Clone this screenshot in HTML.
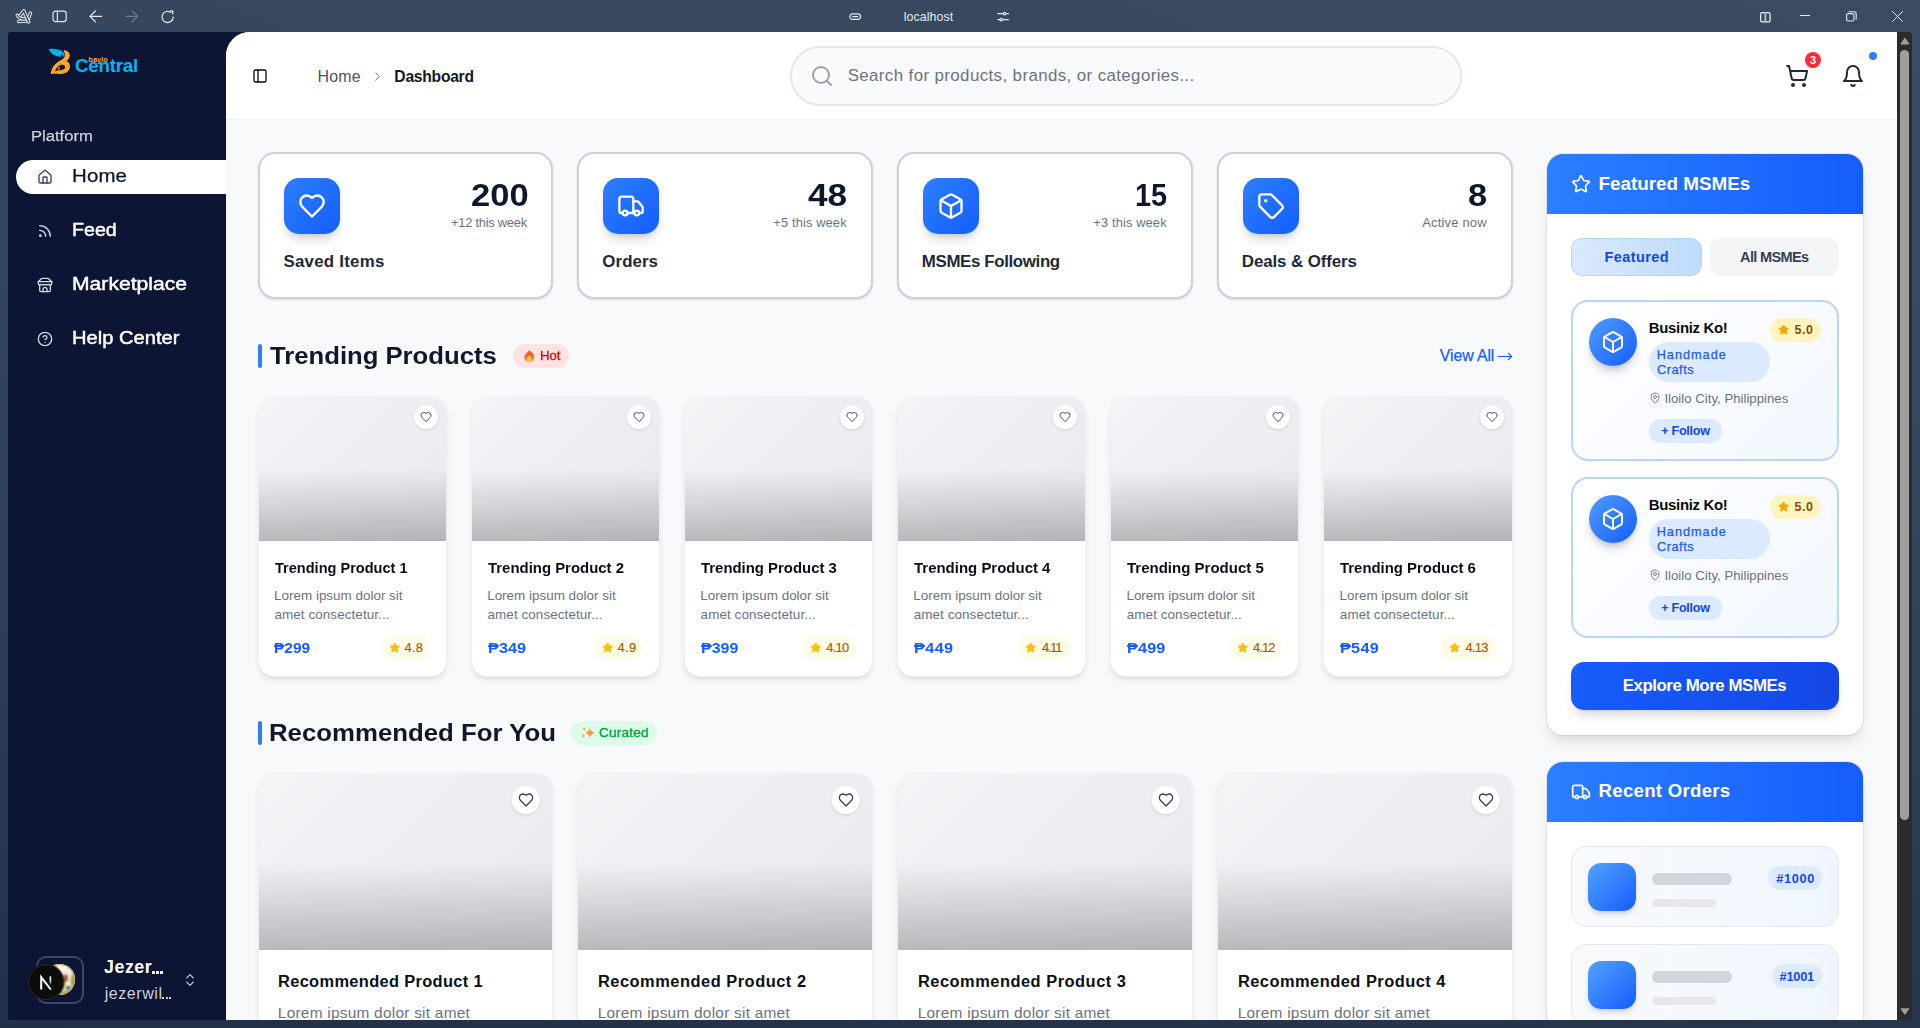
<!DOCTYPE html>
<html lang="en"><head><meta charset="utf-8"><title>Dashboard</title><style>
*{box-sizing:border-box;margin:0;padding:0}
html,body{width:1920px;height:1028px;overflow:hidden;font-family:"Liberation Sans",sans-serif}
body{font-family:"Liberation Sans",sans-serif;position:relative;background:linear-gradient(90deg,rgba(0,0,0,.015) 0%,rgba(255,255,255,.02) 100%),linear-gradient(180deg,#37475f 0%,#35455d 30%,#2f3e56 62%,#27364e 86%,#223149 100%);}
.a{position:absolute}
.t{position:absolute;white-space:nowrap;line-height:1;display:block}
.i{position:absolute;display:block;overflow:visible}
#side{position:absolute;left:8px;top:32px;width:260px;height:988px;background:#0c1533;border-radius:3px 0 0 3px}
#main{position:absolute;left:226px;top:32px;width:1671px;height:988px;overflow:hidden;border-top-left-radius:24px;background:#f8f9fb}
#in{position:absolute;left:-226px;top:-32px;width:1920px;height:1028px}
#sb{position:absolute;left:1897px;top:32px;width:15px;height:988px;background:#2b2b2b;border-radius:0 3px 3px 0}
.card{position:absolute;background:#fff}
</style></head><body><svg class="i" style="left:10.00px;top:4.00px;" width="30.00" height="24.00" viewBox="10 4 30 24" fill="none" stroke="#e4e7ec" stroke-width="1" stroke-linecap="round" stroke-linejoin="round"><path d="M18.7 21.6L26.6 20.9" stroke="#e4e7ec" stroke-width="3.5"/><path d="M18.7 21.6L26.6 20.9" stroke="#35465d" stroke-width="1.5"/><path d="M30.5 13.1L28.1 19.3" stroke="#e4e7ec" stroke-width="3.5"/><path d="M30.5 13.1L28.1 19.3" stroke="#35465d" stroke-width="1.5"/><path d="M17.3 15.3Q19.6 18.9 24.7 19.1" stroke="#e4e7ec" stroke-width="3.5"/><path d="M17.3 15.3Q19.6 18.9 24.7 19.1" stroke="#35465d" stroke-width="1.5"/><path d="M20 15.7L23.7 10.9L28.6 22" stroke="#e4e7ec" stroke-width="3.5"/><path d="M20 15.7L23.7 10.9L28.6 22" stroke="#35465d" stroke-width="1.5"/></svg><svg class="i" style="left:52.40px;top:10.20px;" width="15.20" height="12.80" viewBox="0 0 15.2 12.8" fill="none" stroke="#e4e7ec" stroke-width="1.2" stroke-linecap="round" stroke-linejoin="round"><rect x="1" y="1.2" width="13.2" height="10.4" rx="2.6"/><path d="M5.4 1.4v10"/></svg><svg class="i" style="left:89.20px;top:10.30px;" width="13.60" height="12.80" viewBox="0 0 13.6 12.8" fill="none" stroke="#e4e7ec" stroke-width="1.2" stroke-linecap="round" stroke-linejoin="round"><path d="M12.6 6.4H1.2"/><path d="M6.4 1 1 6.4l5.4 5.4"/></svg><svg class="i" style="left:125.40px;top:10.30px;" width="13.60" height="12.80" viewBox="0 0 13.6 12.8" fill="none" stroke="#6f7c90" stroke-width="1.2" stroke-linecap="round" stroke-linejoin="round"><path d="M1 6.4h11.4"/><path d="M7.2 1l5.4 5.4-5.4 5.4"/></svg><svg class="i" style="left:161.00px;top:10.20px;" width="14.00" height="14.00" viewBox="0 0 14 14" fill="none" stroke="#e4e7ec" stroke-width="1.2" stroke-linecap="round" stroke-linejoin="round"><path d="M12.2 6.9A5.6 5.6 0 1 1 9.9 2.4"/><path d="M9.6 0.9l2.4 0.3-0.4 2.6"/></svg><svg class="i" style="left:848.60px;top:12.90px;" width="12.40" height="7.20" viewBox="0 0 12.4 7.2" fill="none" stroke="#e4e7ec" stroke-width="1.2" stroke-linecap="round" stroke-linejoin="round"><rect x="0.8" y="0.8" width="10.8" height="5.6" rx="2.8"/><path d="M3.6 3.6h5.2"/></svg><span class="t" id="t0" style="left:903.66px;top:11.00px;font-size:12.40px;color:#e4e7ec;letter-spacing:0.065px;">localhost</span><svg class="i" style="left:997.00px;top:10.90px;" width="12.40" height="11.20" viewBox="0 0 12.4 11.2" fill="none" stroke="#e4e7ec" stroke-width="1.1" stroke-linecap="round" stroke-linejoin="round"><path d="M0.8 2.6h5.4"/><path d="M8.8 2.6h2.8"/><circle cx="7.5" cy="2.6" r="1.3"/><path d="M0.8 8.6h2.2"/><path d="M5.6 8.6h6"/><circle cx="4.3" cy="8.6" r="1.3"/></svg><svg class="i" style="left:1759.60px;top:11.60px;" width="10.80" height="10.60" viewBox="0 0 10.8 10.6" fill="none" stroke="#f1f3f6" stroke-width="1.2" stroke-linecap="round" stroke-linejoin="round"><rect x="0.7" y="0.7" width="9.4" height="9.2" rx="1.4"/><path d="M5.4 0.9v8.8" stroke-width="1.8" stroke="#b9c0cb"/></svg><div class="a" style="left:1800.00px;top:15.00px;width:10.00px;height:1.00px;background:#e4e7ec"></div><svg class="i" style="left:1845.60px;top:10.60px;" width="10.80" height="10.60" viewBox="0 0 10.8 10.6" fill="none" stroke="#e4e7ec" stroke-width="1.1" stroke-linecap="round" stroke-linejoin="round"><rect x="0.6" y="2.6" width="7.4" height="7.4" rx="1.6"/><path d="M2.8 0.7h5.2a2.2 2.2 0 0 1 2.2 2.2v5.2"/></svg><svg class="i" style="left:1891.50px;top:10.60px;" width="11.00" height="11.00" viewBox="0 0 11 11" fill="none" stroke="#e4e7ec" stroke-width="1.0" stroke-linecap="round" stroke-linejoin="round"><path d="M0.5 0.5l10 10M10.5 0.5l-10 10"/></svg><div id="side"></div><svg class="i" style="left:48.00px;top:48.00px;" width="24.00" height="28.00" viewBox="48 48 24 28" fill="none" stroke="none" stroke-width="0" stroke-linecap="round" stroke-linejoin="round"><path fill="#f9a629" fill-rule="evenodd" stroke="none" d="M63.6 49.9C67.5 50.5 70.2 52.8 69.8 55.6C69.6 58 68.2 59.8 66.6 61C69 62 70.4 64.4 70 67.2C69.5 71 66 73.6 61 73.9C57.5 74.1 54 73.3 50.9 74.2C50.6 68.6 55.2 63.2 61 60.1C63.5 58.7 65 57 64.9 55C64.8 53.2 64 51.6 63.6 49.9ZM58.7 66.1C60.6 64.4 64.2 64.3 65 66.6C65.6 68.7 63.5 70.3 60 70.2C58 70.2 56.4 70.6 55 71.3C55.8 69.1 57.2 67.3 58.7 66.1Z"/><path fill="#f9a629" stroke="none" d="M57.6 69.6C57.8 67.8 59 66.6 60.6 66.5C59.6 67.3 59.3 68.2 59.6 69.2Z"/><path fill="#00aeef" stroke="none" d="M48.5 49.1C53 48.2 60 48.9 63.2 52C64.5 53.3 64.7 55.2 63.9 57.4C63.6 55.6 62.2 54.5 60.2 54.3C61.2 55 61.7 55.9 61.5 56.8C57 57.1 51 54.6 48.5 49.1Z"/><path fill="none" stroke="#5fd0ff" stroke-width=".5" d="M53.6 53.4C56 53.2 58.6 53.4 60.6 54.2"/></svg><span class="t" id="t1" style="left:75.03px;top:57.43px;font-size:18.75px;color:#00b4f5;font-weight:700;letter-spacing:-0.252px;">Central</span><span class="t" id="t2" style="left:88.31px;top:55.54px;font-size:7.40px;color:#f9a629;font-weight:700;letter-spacing:0.066px;">baylo</span><span class="t" id="t3" style="left:31.07px;top:127.63px;font-size:15.20px;color:#cdd0d9;-webkit-text-stroke:0.25px #cdd0d9;transform:scaleX(1.0926);transform-origin:0 0;">Platform</span><div class="a" style="left:16.00px;top:160.00px;width:210.00px;height:34.00px;background:#fff;border-radius:17px 0 0 17px"></div><svg class="i" style="left:37.00px;top:168.80px;" width="16.00" height="16.00" viewBox="0 0 24 24" fill="none" stroke="#39405f" stroke-width="2" stroke-linecap="round" stroke-linejoin="round"><path d="M15 21v-8a1 1 0 0 0-1-1h-4a1 1 0 0 0-1 1v8"/><path d="M3 10a2 2 0 0 1 .709-1.528l7-5.999a2 2 0 0 1 2.582 0l7 5.999A2 2 0 0 1 21 10v9a2 2 0 0 1-2 2H5a2 2 0 0 1-2-2z"/></svg><span class="t" id="t4" style="left:72.26px;top:167.14px;font-size:18.26px;color:#0c1533;letter-spacing:0.112px;-webkit-text-stroke:0.25px #0c1533;transform:scaleX(1.1200);transform-origin:0 0;">Home</span><svg class="i" style="left:37.00px;top:223.20px;" width="16.00" height="16.00" viewBox="0 0 24 24" fill="none" stroke="#d5d8e0" stroke-width="2" stroke-linecap="round" stroke-linejoin="round"><path d="M4 11a9 9 0 0 1 9 9"/><path d="M4 4a16 16 0 0 1 16 16"/><circle cx="5" cy="19" r="1"/></svg><span class="t" id="t5" style="left:72.23px;top:221.14px;font-size:18.86px;color:#ffffff;-webkit-text-stroke:0.45px #ffffff;transform:scaleX(1.0396);transform-origin:0 0;">Feed</span><svg class="i" style="left:37.00px;top:276.80px;" width="16.00" height="16.00" viewBox="0 0 24 24" fill="none" stroke="#d5d8e0" stroke-width="2" stroke-linecap="round" stroke-linejoin="round"><path d="m2 7 4.41-4.41A2 2 0 0 1 7.83 2h8.34a2 2 0 0 1 1.42.59L22 7"/><path d="M4 12v8a2 2 0 0 0 2 2h12a2 2 0 0 0 2-2v-8"/><path d="M15 22v-4a2 2 0 0 0-2-2h-2a2 2 0 0 0-2 2v4"/><path d="M2 7h20"/><path d="M22 7v3a2 2 0 0 1-2 2a2.7 2.7 0 0 1-1.59-.63.7.7 0 0 0-.82 0A2.7 2.7 0 0 1 16 12a2.7 2.7 0 0 1-1.59-.63.7.7 0 0 0-.82 0A2.7 2.7 0 0 1 12 12a2.7 2.7 0 0 1-1.59-.63.7.7 0 0 0-.82 0A2.7 2.7 0 0 1 8 12a2.7 2.7 0 0 1-1.59-.63.7.7 0 0 0-.82 0A2.7 2.7 0 0 1 4 12a2 2 0 0 1-2-2V7"/></svg><span class="t" id="t6" style="left:72.12px;top:275.14px;font-size:18.86px;color:#ffffff;-webkit-text-stroke:0.45px #ffffff;transform:scaleX(1.1200);transform-origin:0 0;">Marketplace</span><svg class="i" style="left:37.00px;top:330.80px;" width="16.00" height="16.00" viewBox="0 0 24 24" fill="none" stroke="#d5d8e0" stroke-width="2" stroke-linecap="round" stroke-linejoin="round"><circle cx="12" cy="12" r="10"/><path d="M9.09 9a3 3 0 0 1 5.83 1c0 2-3 3-3 3"/><path d="M12 17h.01"/></svg><span class="t" id="t7" style="left:72.19px;top:329.14px;font-size:18.86px;color:#ffffff;-webkit-text-stroke:0.45px #ffffff;transform:scaleX(1.0682);transform-origin:0 0;">Help Center</span><div class="a" style="left:36.00px;top:956.00px;width:48.00px;height:48.00px;border:2px solid #3d4669;border-radius:10px"></div><div class="a" style="left:44.30px;top:964.40px;width:30.90px;height:30.90px;border-radius:50%;overflow:hidden;background:#ece4cf"><div class="a" style="left:-2px;top:-2px;width:34.9px;height:34.9px;filter:blur(.8px);background:radial-gradient(ellipse 8% 14% at 68% 46%,#a3432b 0 50%,rgba(163,67,43,0) 100%),radial-gradient(ellipse 8% 7% at 75% 74%,#1f5553 0 50%,rgba(31,85,83,0) 100%),radial-gradient(ellipse 8% 28% at 88% 54%,#8c9c3c 0 45%,rgba(140,156,60,0) 100%),radial-gradient(ellipse 24% 9% at 66% 88%,#a3ad4c 0 50%,rgba(163,173,76,0) 100%),radial-gradient(ellipse 9% 26% at 60% 58%,#b8834c 0 50%,rgba(184,131,76,0) 100%),radial-gradient(circle at 70% 40%,#f6f2e6 0 40%,#ece4cf 70%,#d9b77c 100%)"></div></div><div class="a" style="left:44.30px;top:964.40px;width:30.90px;height:30.90px;border-radius:50%;border:1.2px solid #cf9148;opacity:.9"></div><div class="a" style="left:27.70px;top:963.60px;width:36.80px;height:36.80px;border-radius:50%;background:#0c0c0c;border:1.8px solid #303030;box-shadow:0 0 0 .6px rgba(0,0,0,.5)"></div><svg class="i" style="left:39.60px;top:975.60px;" width="12.00" height="14.40" viewBox="0 0 12 14.4" fill="none" stroke="#fff" stroke-width="1.5" stroke-linecap="round" stroke-linejoin="round"><defs><linearGradient id="ng" gradientUnits="userSpaceOnUse" x1="0" y1="0.4" x2="0" y2="9"><stop offset="0" stop-color="#fff"/><stop offset=".55" stop-color="#fff" stop-opacity=".85"/><stop offset="1" stop-color="#fff" stop-opacity="0"/></linearGradient></defs><path d="M1.2 13.6V1.2l9.6 12.3" stroke="#fff" stroke-width="2" fill="none" stroke-linejoin="miter" stroke-linecap="butt"/><path d="M10.4 0.4v8.6" stroke="url(#ng)" stroke-width="1.7" stroke-linecap="butt"/></svg><span class="t" id="t8" style="left:104.03px;top:959.06px;font-size:17.88px;color:#ffffff;font-weight:700;letter-spacing:0.513px;">Jezer</span><div class="a" style="left:152.40px;top:970.90px;width:2.90px;height:2.90px;background:#fff;border-radius:.6px"></div><div class="a" style="left:156.10px;top:970.90px;width:2.90px;height:2.90px;background:#fff;border-radius:.6px"></div><div class="a" style="left:159.90px;top:970.90px;width:2.90px;height:2.90px;background:#fff;border-radius:.6px"></div><span class="t" id="t9" style="left:104.69px;top:985.76px;font-size:16.00px;color:#cdd0d9;letter-spacing:0.562px;">jezerwil</span><div class="a" style="left:162.30px;top:996.80px;width:2.10px;height:2.00px;background:#cdd0d9"></div><div class="a" style="left:165.60px;top:996.80px;width:2.10px;height:2.00px;background:#cdd0d9"></div><div class="a" style="left:169.00px;top:996.80px;width:2.10px;height:2.00px;background:#cdd0d9"></div><svg class="i" style="left:182.10px;top:972.00px;" width="16.00" height="16.00" viewBox="0 0 24 24" fill="none" stroke="#c9ccd6" stroke-width="1.6" stroke-linecap="round" stroke-linejoin="round"><path d="m7 15 5 5 5-5"/><path d="m7 9 5-5 5 5"/></svg><div id="main"><div id="in"><div class="a" style="left:226.00px;top:32.00px;width:1671.00px;height:87.00px;background:#fff;border-bottom:1px solid #eef0f3;height:88px"></div><svg class="i" style="left:252.00px;top:68.20px;" width="16.00" height="16.00" viewBox="0 0 24 24" fill="none" stroke="#0f1115" stroke-width="2" stroke-linecap="round" stroke-linejoin="round"><rect x="3" y="3" width="18" height="18" rx="2"/><path d="M9 3v18"/></svg><span class="t" id="t10" style="left:317.49px;top:68.61px;font-size:15.94px;color:#4b5563;letter-spacing:0.233px;">Home</span><svg class="i" style="left:370.10px;top:68.60px;" width="15.00" height="15.00" viewBox="0 0 24 24" fill="none" stroke="#6b7280" stroke-width="1.6" stroke-linecap="round" stroke-linejoin="round"><path d="m9 18 6-6-6-6"/></svg><span class="t" id="t11" style="left:394.35px;top:68.87px;font-size:15.63px;color:#111827;font-weight:700;letter-spacing:-0.244px;">Dashboard</span><div class="a" style="left:790.00px;top:46.00px;width:672.00px;height:60.00px;background:#f9fafb;border:2px solid #e3e6ea;border-radius:30px"></div><svg class="i" style="left:810.00px;top:64.00px;" width="24.00" height="24.00" viewBox="0 0 24 24" fill="none" stroke="#99a1af" stroke-width="2" stroke-linecap="round" stroke-linejoin="round"><circle cx="11" cy="11" r="8"/><path d="m21 21-4.3-4.3"/></svg><span class="t" id="t12" style="left:847.63px;top:67.79px;font-size:16.90px;color:#6b7280;letter-spacing:0.390px;">Search for products, brands, or categories...</span><svg class="i" style="left:1785.00px;top:64.20px;" width="24.00" height="24.00" viewBox="0 0 24 24" fill="none" stroke="#1f2937" stroke-width="2" stroke-linecap="round" stroke-linejoin="round"><circle cx="8" cy="21" r="1"/><circle cx="19" cy="21" r="1"/><path d="M2.05 2.05h2l2.66 12.42a2 2 0 0 0 2 1.58h9.78a2 2 0 0 0 1.95-1.57l1.65-7.43H5.12"/></svg><div class="a" style="left:1805.00px;top:52.00px;width:16.00px;height:16.00px;background:#fb2c36;border-radius:50%"></div><span class="t" id="t13" style="left:1810.11px;top:55.19px;font-size:11.00px;color:#fff;font-weight:700;">3</span><svg class="i" style="left:1841.00px;top:64.20px;" width="24.00" height="24.00" viewBox="0 0 24 24" fill="none" stroke="#1f2937" stroke-width="2" stroke-linecap="round" stroke-linejoin="round"><path d="M6 8a6 6 0 0 1 12 0c0 7 3 9 3 9H3s3-2 3-9"/><path d="M10.3 21a1.94 1.94 0 0 0 3.4 0"/></svg><div class="a" style="left:1869.00px;top:52.20px;width:8.00px;height:8.00px;background:#2b7fff;border-radius:50%"></div><div class="a" style="left:258.00px;top:152.00px;width:295.00px;height:147.00px;background:#fff;border:2px solid #cdd2da;border-radius:17px;box-shadow:0 1px 3px rgba(0,0,0,.08),0 1px 2px rgba(0,0,0,.04)"></div><div class="a" style="left:284.00px;top:178.00px;width:56.00px;height:56.00px;background:linear-gradient(135deg,#2b7fff 0%,#155dfc 100%);border-radius:15px;box-shadow:0 8px 12px -3px rgba(0,0,0,.16),0 3px 5px -2px rgba(0,0,0,.10)"></div><svg class="i" style="left:298.00px;top:192.00px;" width="28.00" height="28.00" viewBox="0 0 24 24" fill="none" stroke="#fff" stroke-width="2" stroke-linecap="round" stroke-linejoin="round"><path d="M19 14c1.49-1.46 3-3.21 3-5.5A5.5 5.5 0 0 0 16.5 3c-1.76 0-3 .5-4.5 2-1.5-1.5-2.74-2-4.5-2A5.5 5.5 0 0 0 2 8.5c0 2.3 1.5 4.05 3 5.5l7 7Z"/></svg><span class="t" id="t14" style="left:470.60px;top:180.00px;font-size:31.13px;color:#0f172a;font-weight:700;transform:scaleX(1.1093);transform-origin:0 0;">200</span><span class="t" id="t15" style="left:450.97px;top:216.68px;font-size:12.90px;color:#6a7282;letter-spacing:-0.256px;">+12 this week</span><span class="t" id="t16" style="left:283.51px;top:254.13px;font-size:16.86px;color:#1f2937;font-weight:700;letter-spacing:0.237px;">Saved Items</span><div class="a" style="left:577.00px;top:152.00px;width:296.00px;height:147.00px;background:#fff;border:2px solid #cdd2da;border-radius:17px;box-shadow:0 1px 3px rgba(0,0,0,.08),0 1px 2px rgba(0,0,0,.04)"></div><div class="a" style="left:603.00px;top:178.00px;width:56.00px;height:56.00px;background:linear-gradient(135deg,#2b7fff 0%,#155dfc 100%);border-radius:15px;box-shadow:0 8px 12px -3px rgba(0,0,0,.16),0 3px 5px -2px rgba(0,0,0,.10)"></div><svg class="i" style="left:617.00px;top:192.00px;" width="28.00" height="28.00" viewBox="0 0 24 24" fill="none" stroke="#fff" stroke-width="2" stroke-linecap="round" stroke-linejoin="round"><path d="M14 18V6a2 2 0 0 0-2-2H4a2 2 0 0 0-2 2v11a1 1 0 0 0 1 1h2"/><path d="M15 18H9"/><path d="M19 18h2a1 1 0 0 0 1-1v-3.65a1 1 0 0 0-.22-.624l-3.48-4.35A1 1 0 0 0 17.52 8H14"/><circle cx="17" cy="18" r="2"/><circle cx="7" cy="18" r="2"/></svg><span class="t" id="t17" style="left:808.27px;top:180.00px;font-size:31.13px;color:#0f172a;font-weight:700;transform:scaleX(1.1296);transform-origin:0 0;">48</span><span class="t" id="t18" style="left:773.37px;top:216.68px;font-size:12.90px;color:#6a7282;letter-spacing:0.109px;">+5 this week</span><span class="t" id="t19" style="left:602.31px;top:254.13px;font-size:16.86px;color:#1f2937;font-weight:700;letter-spacing:0.077px;">Orders</span><div class="a" style="left:897.00px;top:152.00px;width:296.00px;height:147.00px;background:#fff;border:2px solid #cdd2da;border-radius:17px;box-shadow:0 1px 3px rgba(0,0,0,.08),0 1px 2px rgba(0,0,0,.04)"></div><div class="a" style="left:923.00px;top:178.00px;width:56.00px;height:56.00px;background:linear-gradient(135deg,#2b7fff 0%,#155dfc 100%);border-radius:15px;box-shadow:0 8px 12px -3px rgba(0,0,0,.16),0 3px 5px -2px rgba(0,0,0,.10)"></div><svg class="i" style="left:937.00px;top:192.00px;" width="28.00" height="28.00" viewBox="0 0 24 24" fill="none" stroke="#fff" stroke-width="2" stroke-linecap="round" stroke-linejoin="round"><path d="M21 8a2 2 0 0 0-1-1.73l-7-4a2 2 0 0 0-2 0l-7 4A2 2 0 0 0 3 8v8a2 2 0 0 0 1 1.73l7 4a2 2 0 0 0 2 0l7-4A2 2 0 0 0 21 16Z"/><path d="m3.3 7 8.7 5 8.7-5"/><path d="M12 22V12"/></svg><span class="t" id="t20" style="left:1134.98px;top:180.00px;font-size:31.13px;color:#0f172a;font-weight:700;transform:scaleX(0.9277);transform-origin:0 0;">15</span><span class="t" id="t21" style="left:1093.37px;top:216.68px;font-size:12.90px;color:#6a7282;letter-spacing:0.109px;">+3 this week</span><span class="t" id="t22" style="left:921.87px;top:254.13px;font-size:16.86px;color:#1f2937;font-weight:700;letter-spacing:-0.360px;">MSMEs Following</span><div class="a" style="left:1217.00px;top:152.00px;width:296.00px;height:147.00px;background:#fff;border:2px solid #cdd2da;border-radius:17px;box-shadow:0 1px 3px rgba(0,0,0,.08),0 1px 2px rgba(0,0,0,.04)"></div><div class="a" style="left:1243.00px;top:178.00px;width:56.00px;height:56.00px;background:linear-gradient(135deg,#2b7fff 0%,#155dfc 100%);border-radius:15px;box-shadow:0 8px 12px -3px rgba(0,0,0,.16),0 3px 5px -2px rgba(0,0,0,.10)"></div><svg class="i" style="left:1257.00px;top:192.00px;" width="28.00" height="28.00" viewBox="0 0 24 24" fill="none" stroke="#fff" stroke-width="2" stroke-linecap="round" stroke-linejoin="round"><path d="M12.586 2.586A2 2 0 0 0 11.172 2H4a2 2 0 0 0-2 2v7.172a2 2 0 0 0 .586 1.414l8.704 8.704a2.426 2.426 0 0 0 3.42 0l6.58-6.58a2.426 2.426 0 0 0 0-3.42z"/><circle cx="7.5" cy="7.5" r=".5" fill="#fff"/></svg><span class="t" id="t23" style="left:1468.21px;top:180.00px;font-size:31.13px;color:#0f172a;font-weight:700;transform:scaleX(1.1063);transform-origin:0 0;">8</span><span class="t" id="t24" style="left:1422.17px;top:216.68px;font-size:12.90px;color:#6a7282;letter-spacing:0.228px;">Active now</span><span class="t" id="t25" style="left:1241.87px;top:254.13px;font-size:16.86px;color:#1f2937;font-weight:700;letter-spacing:-0.091px;">Deals &amp; Offers</span><div class="a" style="left:258.00px;top:344.20px;width:4.00px;height:23.50px;background:#2b7fff;border-radius:2px"></div><span class="t" id="t26" style="left:270.11px;top:343.69px;font-size:24.35px;color:#0f172a;font-weight:700;transform:scaleX(1.0543);transform-origin:0 0;">Trending Products</span><div class="a" style="left:513.00px;top:344.20px;width:56.00px;height:23.40px;background:#ffe2e2;border-radius:12px"></div><svg class="i" style="left:523.70px;top:349.80px;" width="10.46" height="12.20" viewBox="0 0 10.8 12.6" fill="none" stroke="none" stroke-width="0" stroke-linecap="round" stroke-linejoin="round"><defs><linearGradient id="fl" x1="0" y1="0" x2="0" y2="1"><stop offset="0" stop-color="#e8452c"/><stop offset=".55" stop-color="#f4722b"/><stop offset="1" stop-color="#f9a03a"/></linearGradient></defs><path fill="url(#fl)" stroke="none" d="M5.6 0.2C6.6 0.8 7.2 1.900 7.500 3.100C7.800 2.700 8 2.200 8.100 1.700C9.600 3.300 10.400 5.300 10.400 7.400C10.400 10.400 8.200 12.400 5.300 12.400C2.400 12.400 0.400 10.400 0.400 7.700C0.400 5.700 1.400 4.300 2.600 3C3.700 1.900 5 1.200 5.600 0.200z"/><path fill="#ffc94d" stroke="none" d="M5.500 5.600C6.900 6.900 7.900 8 7.900 9.500C7.900 11 6.800 12 5.400 12C4 12 2.900 11 2.900 9.600C2.900 8.300 3.700 7.500 4.400 6.700C4.900 6.200 5.300 5.900 5.500 5.600z"/></svg><span class="t" id="t27" style="left:539.88px;top:350.39px;font-size:12.65px;color:#e7000b;-webkit-text-stroke:0.30px #e7000b;transform:scaleX(1.0349);transform-origin:0 0;">Hot</span><span class="t" id="t28" style="left:1439.86px;top:348.47px;font-size:15.86px;color:#155dfc;letter-spacing:-0.110px;-webkit-text-stroke:0.25px #155dfc;">View All</span><svg class="i" style="left:1497.20px;top:351.80px;" width="15.60" height="9.00" viewBox="0 0 15.6 9" fill="none" stroke="#155dfc" stroke-width="1.2" stroke-linecap="round" stroke-linejoin="round"><path d="M1 4.500h13.500"/><path d="M11.400 1.300l3.200 3.200-3.200 3.200"/></svg><div class="a" style="left:258.00px;top:396.00px;width:189.10px;height:281.00px;background:#fff;border:1px solid #eff0f3;border-radius:16px;overflow:hidden;box-shadow:0 4px 7px -1px rgba(0,0,0,.09),0 2px 4px -2px rgba(0,0,0,.07)"><div class="a" style="left:0;top:0;width:100%;height:143.6px;background:linear-gradient(180deg,rgba(0,0,0,0) 0%,rgba(0,0,0,0) 50%,rgba(0,0,0,.23) 100%),linear-gradient(135deg,#f3f4f6 0%,#e7e9ed 100%)"></div></div><div class="a" style="left:414.10px;top:405.00px;width:24.00px;height:24.00px;background:rgba(255,255,255,.92);border-radius:50%;box-shadow:0 1px 3px rgba(0,0,0,.12)"></div><svg class="i" style="left:420.10px;top:411.20px;" width="12.00" height="12.00" viewBox="0 0 24 24" fill="none" stroke="#4a5565" stroke-width="2" stroke-linecap="round" stroke-linejoin="round"><path d="M19 14c1.49-1.46 3-3.21 3-5.5A5.5 5.5 0 0 0 16.5 3c-1.76 0-3 .5-4.5 2-1.5-1.5-2.74-2-4.5-2A5.5 5.5 0 0 0 2 8.5c0 2.3 1.5 4.05 3 5.5l7 7Z"/></svg><span class="t" id="t29" style="left:275.04px;top:560.27px;font-size:15.04px;color:#0b0f1a;font-weight:700;transform:scaleX(0.9679);transform-origin:0 0;">Trending Product 1</span><span class="t" id="t30" style="left:274.10px;top:588.71px;font-size:13.45px;color:#6a7282;">Lorem ipsum dolor sit</span><span class="t" id="t31" style="left:274.43px;top:608.46px;font-size:13.45px;color:#6a7282;letter-spacing:0.082px;">amet consectetur...</span><span class="t" id="t32" style="left:274.46px;top:640.80px;font-size:14.53px;color:#155dfc;font-weight:700;transform:scaleX(1.0650);transform-origin:0 0;">₱299</span><div class="a" style="left:380.50px;top:636.20px;width:49.60px;height:23.40px;background:#fefbe8;border-radius:12px"></div><svg class="i" style="left:388.60px;top:642.10px;" width="11.40" height="11.40" viewBox="0 0 24 24" fill="#fbbf0a" stroke="#fbbf0a" stroke-width="2" stroke-linecap="round" stroke-linejoin="round"><path d="M11.525 2.295a.53.53 0 0 1 .95 0l2.31 4.679a2.123 2.123 0 0 0 1.595 1.16l5.166.756a.53.53 0 0 1 .294.904l-3.736 3.638a2.123 2.123 0 0 0-.611 1.878l.882 5.14a.53.53 0 0 1-.771.56l-4.618-2.428a2.122 2.122 0 0 0-1.973 0L6.396 21.01a.53.53 0 0 1-.77-.56l.881-5.139a2.122 2.122 0 0 0-.611-1.879L2.16 9.795a.53.53 0 0 1 .294-.906l5.165-.755a2.122 2.122 0 0 0 1.597-1.16z"/></svg><span class="t" id="t33" style="left:404.51px;top:641.72px;font-size:12.85px;color:#a65f00;letter-spacing:0.297px;-webkit-text-stroke:0.20px #a65f00;">4.8</span><div class="a" style="left:471.08px;top:396.00px;width:189.10px;height:281.00px;background:#fff;border:1px solid #eff0f3;border-radius:16px;overflow:hidden;box-shadow:0 4px 7px -1px rgba(0,0,0,.09),0 2px 4px -2px rgba(0,0,0,.07)"><div class="a" style="left:0;top:0;width:100%;height:143.6px;background:linear-gradient(180deg,rgba(0,0,0,0) 0%,rgba(0,0,0,0) 50%,rgba(0,0,0,.23) 100%),linear-gradient(135deg,#f3f4f6 0%,#e7e9ed 100%)"></div></div><div class="a" style="left:627.18px;top:405.00px;width:24.00px;height:24.00px;background:rgba(255,255,255,.92);border-radius:50%;box-shadow:0 1px 3px rgba(0,0,0,.12)"></div><svg class="i" style="left:633.18px;top:411.20px;" width="12.00" height="12.00" viewBox="0 0 24 24" fill="none" stroke="#4a5565" stroke-width="2" stroke-linecap="round" stroke-linejoin="round"><path d="M19 14c1.49-1.46 3-3.21 3-5.5A5.5 5.5 0 0 0 16.5 3c-1.76 0-3 .5-4.5 2-1.5-1.5-2.74-2-4.5-2A5.5 5.5 0 0 0 2 8.5c0 2.3 1.5 4.05 3 5.5l7 7Z"/></svg><span class="t" id="t34" style="left:488.11px;top:560.27px;font-size:15.04px;color:#0b0f1a;font-weight:700;transform:scaleX(0.9927);transform-origin:0 0;">Trending Product 2</span><span class="t" id="t35" style="left:487.18px;top:588.71px;font-size:13.45px;color:#6a7282;">Lorem ipsum dolor sit</span><span class="t" id="t36" style="left:487.51px;top:608.46px;font-size:13.45px;color:#6a7282;letter-spacing:0.082px;">amet consectetur...</span><span class="t" id="t37" style="left:487.54px;top:640.80px;font-size:14.53px;color:#155dfc;font-weight:700;letter-spacing:0.051px;transform:scaleX(1.1200);transform-origin:0 0;">₱349</span><div class="a" style="left:593.58px;top:636.20px;width:49.60px;height:23.40px;background:#fefbe8;border-radius:12px"></div><svg class="i" style="left:601.68px;top:642.10px;" width="11.40" height="11.40" viewBox="0 0 24 24" fill="#fbbf0a" stroke="#fbbf0a" stroke-width="2" stroke-linecap="round" stroke-linejoin="round"><path d="M11.525 2.295a.53.53 0 0 1 .95 0l2.31 4.679a2.123 2.123 0 0 0 1.595 1.16l5.166.756a.53.53 0 0 1 .294.904l-3.736 3.638a2.123 2.123 0 0 0-.611 1.878l.882 5.14a.53.53 0 0 1-.771.56l-4.618-2.428a2.122 2.122 0 0 0-1.973 0L6.396 21.01a.53.53 0 0 1-.77-.56l.881-5.139a2.122 2.122 0 0 0-.611-1.879L2.16 9.795a.53.53 0 0 1 .294-.906l5.165-.755a2.122 2.122 0 0 0 1.597-1.16z"/></svg><span class="t" id="t38" style="left:617.59px;top:641.72px;font-size:12.85px;color:#a65f00;letter-spacing:0.322px;-webkit-text-stroke:0.20px #a65f00;">4.9</span><div class="a" style="left:684.17px;top:396.00px;width:189.10px;height:281.00px;background:#fff;border:1px solid #eff0f3;border-radius:16px;overflow:hidden;box-shadow:0 4px 7px -1px rgba(0,0,0,.09),0 2px 4px -2px rgba(0,0,0,.07)"><div class="a" style="left:0;top:0;width:100%;height:143.6px;background:linear-gradient(180deg,rgba(0,0,0,0) 0%,rgba(0,0,0,0) 50%,rgba(0,0,0,.23) 100%),linear-gradient(135deg,#f3f4f6 0%,#e7e9ed 100%)"></div></div><div class="a" style="left:840.27px;top:405.00px;width:24.00px;height:24.00px;background:rgba(255,255,255,.92);border-radius:50%;box-shadow:0 1px 3px rgba(0,0,0,.12)"></div><svg class="i" style="left:846.27px;top:411.20px;" width="12.00" height="12.00" viewBox="0 0 24 24" fill="none" stroke="#4a5565" stroke-width="2" stroke-linecap="round" stroke-linejoin="round"><path d="M19 14c1.49-1.46 3-3.21 3-5.5A5.5 5.5 0 0 0 16.5 3c-1.76 0-3 .5-4.5 2-1.5-1.5-2.74-2-4.5-2A5.5 5.5 0 0 0 2 8.5c0 2.3 1.5 4.05 3 5.5l7 7Z"/></svg><span class="t" id="t39" style="left:701.20px;top:560.27px;font-size:15.04px;color:#0b0f1a;font-weight:700;transform:scaleX(0.9922);transform-origin:0 0;">Trending Product 3</span><span class="t" id="t40" style="left:700.27px;top:588.71px;font-size:13.45px;color:#6a7282;">Lorem ipsum dolor sit</span><span class="t" id="t41" style="left:700.60px;top:608.46px;font-size:13.45px;color:#6a7282;letter-spacing:0.082px;">amet consectetur...</span><span class="t" id="t42" style="left:700.63px;top:640.80px;font-size:14.53px;color:#155dfc;font-weight:700;transform:scaleX(1.1011);transform-origin:0 0;">₱399</span><div class="a" style="left:801.87px;top:636.20px;width:54.40px;height:23.40px;background:#fefbe8;border-radius:12px"></div><svg class="i" style="left:809.97px;top:642.10px;" width="11.40" height="11.40" viewBox="0 0 24 24" fill="#fbbf0a" stroke="#fbbf0a" stroke-width="2" stroke-linecap="round" stroke-linejoin="round"><path d="M11.525 2.295a.53.53 0 0 1 .95 0l2.31 4.679a2.123 2.123 0 0 0 1.595 1.16l5.166.756a.53.53 0 0 1 .294.904l-3.736 3.638a2.123 2.123 0 0 0-.611 1.878l.882 5.14a.53.53 0 0 1-.771.56l-4.618-2.428a2.122 2.122 0 0 0-1.973 0L6.396 21.01a.53.53 0 0 1-.77-.56l.881-5.139a2.122 2.122 0 0 0-.611-1.879L2.16 9.795a.53.53 0 0 1 .294-.906l5.165-.755a2.122 2.122 0 0 0 1.597-1.16z"/></svg><span class="t" id="t43" style="left:826.28px;top:641.72px;font-size:12.85px;color:#a65f00;letter-spacing:-0.734px;-webkit-text-stroke:0.20px #a65f00;">4.10</span><div class="a" style="left:897.25px;top:396.00px;width:189.10px;height:281.00px;background:#fff;border:1px solid #eff0f3;border-radius:16px;overflow:hidden;box-shadow:0 4px 7px -1px rgba(0,0,0,.09),0 2px 4px -2px rgba(0,0,0,.07)"><div class="a" style="left:0;top:0;width:100%;height:143.6px;background:linear-gradient(180deg,rgba(0,0,0,0) 0%,rgba(0,0,0,0) 50%,rgba(0,0,0,.23) 100%),linear-gradient(135deg,#f3f4f6 0%,#e7e9ed 100%)"></div></div><div class="a" style="left:1053.35px;top:405.00px;width:24.00px;height:24.00px;background:rgba(255,255,255,.92);border-radius:50%;box-shadow:0 1px 3px rgba(0,0,0,.12)"></div><svg class="i" style="left:1059.35px;top:411.20px;" width="12.00" height="12.00" viewBox="0 0 24 24" fill="none" stroke="#4a5565" stroke-width="2" stroke-linecap="round" stroke-linejoin="round"><path d="M19 14c1.49-1.46 3-3.21 3-5.5A5.5 5.5 0 0 0 16.5 3c-1.76 0-3 .5-4.5 2-1.5-1.5-2.74-2-4.5-2A5.5 5.5 0 0 0 2 8.5c0 2.3 1.5 4.05 3 5.5l7 7Z"/></svg><span class="t" id="t44" style="left:914.28px;top:560.27px;font-size:15.04px;color:#0b0f1a;font-weight:700;transform:scaleX(0.9962);transform-origin:0 0;">Trending Product 4</span><span class="t" id="t45" style="left:913.35px;top:588.71px;font-size:13.45px;color:#6a7282;">Lorem ipsum dolor sit</span><span class="t" id="t46" style="left:913.68px;top:608.46px;font-size:13.45px;color:#6a7282;letter-spacing:0.082px;">amet consectetur...</span><span class="t" id="t47" style="left:913.71px;top:640.80px;font-size:14.53px;color:#155dfc;font-weight:700;letter-spacing:0.349px;transform:scaleX(1.1200);transform-origin:0 0;">₱449</span><div class="a" style="left:1016.95px;top:636.20px;width:52.40px;height:23.40px;background:#fefbe8;border-radius:12px"></div><svg class="i" style="left:1025.05px;top:642.10px;" width="11.40" height="11.40" viewBox="0 0 24 24" fill="#fbbf0a" stroke="#fbbf0a" stroke-width="2" stroke-linecap="round" stroke-linejoin="round"><path d="M11.525 2.295a.53.53 0 0 1 .95 0l2.31 4.679a2.123 2.123 0 0 0 1.595 1.16l5.166.756a.53.53 0 0 1 .294.904l-3.736 3.638a2.123 2.123 0 0 0-.611 1.878l.882 5.14a.53.53 0 0 1-.771.56l-4.618-2.428a2.122 2.122 0 0 0-1.973 0L6.396 21.01a.53.53 0 0 1-.77-.56l.881-5.139a2.122 2.122 0 0 0-.611-1.879L2.16 9.795a.53.53 0 0 1 .294-.906l5.165-.755a2.122 2.122 0 0 0 1.597-1.16z"/></svg><span class="t" id="t48" style="left:1041.96px;top:641.72px;font-size:12.85px;color:#a65f00;letter-spacing:-1.242px;-webkit-text-stroke:0.20px #a65f00;">4.11</span><div class="a" style="left:1110.33px;top:396.00px;width:189.10px;height:281.00px;background:#fff;border:1px solid #eff0f3;border-radius:16px;overflow:hidden;box-shadow:0 4px 7px -1px rgba(0,0,0,.09),0 2px 4px -2px rgba(0,0,0,.07)"><div class="a" style="left:0;top:0;width:100%;height:143.6px;background:linear-gradient(180deg,rgba(0,0,0,0) 0%,rgba(0,0,0,0) 50%,rgba(0,0,0,.23) 100%),linear-gradient(135deg,#f3f4f6 0%,#e7e9ed 100%)"></div></div><div class="a" style="left:1266.43px;top:405.00px;width:24.00px;height:24.00px;background:rgba(255,255,255,.92);border-radius:50%;box-shadow:0 1px 3px rgba(0,0,0,.12)"></div><svg class="i" style="left:1272.43px;top:411.20px;" width="12.00" height="12.00" viewBox="0 0 24 24" fill="none" stroke="#4a5565" stroke-width="2" stroke-linecap="round" stroke-linejoin="round"><path d="M19 14c1.49-1.46 3-3.21 3-5.5A5.5 5.5 0 0 0 16.5 3c-1.76 0-3 .5-4.5 2-1.5-1.5-2.74-2-4.5-2A5.5 5.5 0 0 0 2 8.5c0 2.3 1.5 4.05 3 5.5l7 7Z"/></svg><span class="t" id="t49" style="left:1127.36px;top:560.27px;font-size:15.04px;color:#0b0f1a;font-weight:700;transform:scaleX(0.9987);transform-origin:0 0;">Trending Product 5</span><span class="t" id="t50" style="left:1126.43px;top:588.71px;font-size:13.45px;color:#6a7282;">Lorem ipsum dolor sit</span><span class="t" id="t51" style="left:1126.76px;top:608.46px;font-size:13.45px;color:#6a7282;letter-spacing:0.082px;">amet consectetur...</span><span class="t" id="t52" style="left:1126.79px;top:640.80px;font-size:14.53px;color:#155dfc;font-weight:700;letter-spacing:0.111px;transform:scaleX(1.1200);transform-origin:0 0;">₱499</span><div class="a" style="left:1228.63px;top:636.20px;width:53.80px;height:23.40px;background:#fefbe8;border-radius:12px"></div><svg class="i" style="left:1236.73px;top:642.10px;" width="11.40" height="11.40" viewBox="0 0 24 24" fill="#fbbf0a" stroke="#fbbf0a" stroke-width="2" stroke-linecap="round" stroke-linejoin="round"><path d="M11.525 2.295a.53.53 0 0 1 .95 0l2.31 4.679a2.123 2.123 0 0 0 1.595 1.16l5.166.756a.53.53 0 0 1 .294.904l-3.736 3.638a2.123 2.123 0 0 0-.611 1.878l.882 5.14a.53.53 0 0 1-.771.56l-4.618-2.428a2.122 2.122 0 0 0-1.973 0L6.396 21.01a.53.53 0 0 1-.77-.56l.881-5.139a2.122 2.122 0 0 0-.611-1.879L2.16 9.795a.53.53 0 0 1 .294-.906l5.165-.755a2.122 2.122 0 0 0 1.597-1.16z"/></svg><span class="t" id="t53" style="left:1253.04px;top:641.72px;font-size:12.85px;color:#a65f00;letter-spacing:-0.886px;-webkit-text-stroke:0.20px #a65f00;">4.12</span><div class="a" style="left:1323.42px;top:396.00px;width:189.10px;height:281.00px;background:#fff;border:1px solid #eff0f3;border-radius:16px;overflow:hidden;box-shadow:0 4px 7px -1px rgba(0,0,0,.09),0 2px 4px -2px rgba(0,0,0,.07)"><div class="a" style="left:0;top:0;width:100%;height:143.6px;background:linear-gradient(180deg,rgba(0,0,0,0) 0%,rgba(0,0,0,0) 50%,rgba(0,0,0,.23) 100%),linear-gradient(135deg,#f3f4f6 0%,#e7e9ed 100%)"></div></div><div class="a" style="left:1479.52px;top:405.00px;width:24.00px;height:24.00px;background:rgba(255,255,255,.92);border-radius:50%;box-shadow:0 1px 3px rgba(0,0,0,.12)"></div><svg class="i" style="left:1485.52px;top:411.20px;" width="12.00" height="12.00" viewBox="0 0 24 24" fill="none" stroke="#4a5565" stroke-width="2" stroke-linecap="round" stroke-linejoin="round"><path d="M19 14c1.49-1.46 3-3.21 3-5.5A5.5 5.5 0 0 0 16.5 3c-1.76 0-3 .5-4.5 2-1.5-1.5-2.74-2-4.5-2A5.5 5.5 0 0 0 2 8.5c0 2.3 1.5 4.05 3 5.5l7 7Z"/></svg><span class="t" id="t54" style="left:1340.45px;top:560.27px;font-size:15.04px;color:#0b0f1a;font-weight:700;transform:scaleX(0.9922);transform-origin:0 0;">Trending Product 6</span><span class="t" id="t55" style="left:1339.52px;top:588.71px;font-size:13.45px;color:#6a7282;">Lorem ipsum dolor sit</span><span class="t" id="t56" style="left:1339.85px;top:608.46px;font-size:13.45px;color:#6a7282;letter-spacing:0.082px;">amet consectetur...</span><span class="t" id="t57" style="left:1339.88px;top:640.80px;font-size:14.53px;color:#155dfc;font-weight:700;letter-spacing:0.230px;transform:scaleX(1.1200);transform-origin:0 0;">₱549</span><div class="a" style="left:1441.12px;top:636.20px;width:54.40px;height:23.40px;background:#fefbe8;border-radius:12px"></div><svg class="i" style="left:1449.22px;top:642.10px;" width="11.40" height="11.40" viewBox="0 0 24 24" fill="#fbbf0a" stroke="#fbbf0a" stroke-width="2" stroke-linecap="round" stroke-linejoin="round"><path d="M11.525 2.295a.53.53 0 0 1 .95 0l2.31 4.679a2.123 2.123 0 0 0 1.595 1.16l5.166.756a.53.53 0 0 1 .294.904l-3.736 3.638a2.123 2.123 0 0 0-.611 1.878l.882 5.14a.53.53 0 0 1-.771.56l-4.618-2.428a2.122 2.122 0 0 0-1.973 0L6.396 21.01a.53.53 0 0 1-.77-.56l.881-5.139a2.122 2.122 0 0 0-.611-1.879L2.16 9.795a.53.53 0 0 1 .294-.906l5.165-.755a2.122 2.122 0 0 0 1.597-1.16z"/></svg><span class="t" id="t58" style="left:1465.53px;top:641.72px;font-size:12.85px;color:#a65f00;letter-spacing:-0.713px;-webkit-text-stroke:0.20px #a65f00;">4.13</span><div class="a" style="left:258.00px;top:721.20px;width:4.00px;height:23.50px;background:#2b7fff;border-radius:2px"></div><span class="t" id="t59" style="left:268.67px;top:721.00px;font-size:23.98px;color:#0f172a;font-weight:700;transform:scaleX(1.0758);transform-origin:0 0;">Recommended For You</span><div class="a" style="left:571.20px;top:721.20px;width:85.60px;height:23.40px;background:#dcfce7;border-radius:12px"></div><svg class="i" style="left:579.90px;top:726.10px;" width="14.99" height="12.80" viewBox="0 0 16.4 14" fill="none" stroke="none" stroke-width="0" stroke-linecap="round" stroke-linejoin="round"><defs><linearGradient id="sp" x1="0" y1="0" x2="0.3" y2="1"><stop offset="0" stop-color="#ffb53f"/><stop offset="1" stop-color="#ff8248"/></linearGradient></defs><path fill="url(#sp)" stroke="none" d="M10.800 1.400C11.300 4.600 12.400 6 15.800 7.400C12.400 8.600 11.500 10 10.800 13.400C10.200 10 9.200 8.600 5.800 7.400C9.200 6 10.200 4.600 10.800 1.400z"/><path fill="#ff9a5a" stroke="none" d="M4.700 0.800C4.900 2.200 5.400 2.800 6.800 3.200C5.400 3.700 4.900 4.200 4.700 5.600C4.400 4.200 4 3.700 2.600 3.200C4 2.800 4.400 2.200 4.700 0.800zM3.600 8.600C3.800 10 4.300 10.500 5.700 11C4.300 11.400 3.800 12 3.600 13.400C3.300 12 2.900 11.400 1.500 11C2.900 10.500 3.300 10 3.600 8.600z"/></svg><span class="t" id="t60" style="left:598.77px;top:727.39px;font-size:12.65px;color:#00a63e;letter-spacing:0.165px;-webkit-text-stroke:0.30px #00a63e;transform:scaleX(1.0800);transform-origin:0 0;">Curated</span><div class="a" style="left:258.00px;top:773.00px;width:295.00px;height:300.00px;background:#fff;border:1px solid #eff0f3;border-radius:16px;overflow:hidden;box-shadow:0 4px 7px -1px rgba(0,0,0,.09),0 2px 4px -2px rgba(0,0,0,.07)"><div class="a" style="left:0;top:0;width:100%;height:175.9px;background:linear-gradient(180deg,rgba(0,0,0,0) 0%,rgba(0,0,0,0) 50%,rgba(0,0,0,.23) 100%),linear-gradient(135deg,#f3f4f6 0%,#e7e9ed 100%)"></div></div><div class="a" style="left:512.40px;top:786.00px;width:28.00px;height:28.00px;background:rgba(255,255,255,.94);border-radius:50%;box-shadow:0 1px 3px rgba(0,0,0,.12)"></div><svg class="i" style="left:518.40px;top:792.20px;" width="16.00" height="16.00" viewBox="0 0 24 24" fill="none" stroke="#364153" stroke-width="2" stroke-linecap="round" stroke-linejoin="round"><path d="M19 14c1.49-1.46 3-3.21 3-5.5A5.5 5.5 0 0 0 16.5 3c-1.76 0-3 .5-4.5 2-1.5-1.5-2.74-2-4.5-2A5.5 5.5 0 0 0 2 8.5c0 2.3 1.5 4.05 3 5.5l7 7Z"/></svg><span class="t" id="t61" style="left:278.00px;top:973.30px;font-size:16.42px;color:#0b0f1a;font-weight:700;letter-spacing:0.336px;">Recommended Product 1</span><span class="t" id="t62" style="left:277.84px;top:1005.35px;font-size:15.42px;color:#6a7282;letter-spacing:0.247px;">Lorem ipsum dolor sit amet</span><div class="a" style="left:577.00px;top:773.00px;width:296.00px;height:300.00px;background:#fff;border:1px solid #eff0f3;border-radius:16px;overflow:hidden;box-shadow:0 4px 7px -1px rgba(0,0,0,.09),0 2px 4px -2px rgba(0,0,0,.07)"><div class="a" style="left:0;top:0;width:100%;height:175.9px;background:linear-gradient(180deg,rgba(0,0,0,0) 0%,rgba(0,0,0,0) 50%,rgba(0,0,0,.23) 100%),linear-gradient(135deg,#f3f4f6 0%,#e7e9ed 100%)"></div></div><div class="a" style="left:832.40px;top:786.00px;width:28.00px;height:28.00px;background:rgba(255,255,255,.94);border-radius:50%;box-shadow:0 1px 3px rgba(0,0,0,.12)"></div><svg class="i" style="left:838.40px;top:792.20px;" width="16.00" height="16.00" viewBox="0 0 24 24" fill="none" stroke="#364153" stroke-width="2" stroke-linecap="round" stroke-linejoin="round"><path d="M19 14c1.49-1.46 3-3.21 3-5.5A5.5 5.5 0 0 0 16.5 3c-1.76 0-3 .5-4.5 2-1.5-1.5-2.74-2-4.5-2A5.5 5.5 0 0 0 2 8.5c0 2.3 1.5 4.05 3 5.5l7 7Z"/></svg><span class="t" id="t63" style="left:597.90px;top:973.30px;font-size:16.42px;color:#0b0f1a;font-weight:700;letter-spacing:0.516px;">Recommended Product 2</span><span class="t" id="t64" style="left:597.74px;top:1005.35px;font-size:15.42px;color:#6a7282;letter-spacing:0.247px;">Lorem ipsum dolor sit amet</span><div class="a" style="left:897.00px;top:773.00px;width:296.00px;height:300.00px;background:#fff;border:1px solid #eff0f3;border-radius:16px;overflow:hidden;box-shadow:0 4px 7px -1px rgba(0,0,0,.09),0 2px 4px -2px rgba(0,0,0,.07)"><div class="a" style="left:0;top:0;width:100%;height:175.9px;background:linear-gradient(180deg,rgba(0,0,0,0) 0%,rgba(0,0,0,0) 50%,rgba(0,0,0,.23) 100%),linear-gradient(135deg,#f3f4f6 0%,#e7e9ed 100%)"></div></div><div class="a" style="left:1152.40px;top:786.00px;width:28.00px;height:28.00px;background:rgba(255,255,255,.94);border-radius:50%;box-shadow:0 1px 3px rgba(0,0,0,.12)"></div><svg class="i" style="left:1158.40px;top:792.20px;" width="16.00" height="16.00" viewBox="0 0 24 24" fill="none" stroke="#364153" stroke-width="2" stroke-linecap="round" stroke-linejoin="round"><path d="M19 14c1.49-1.46 3-3.21 3-5.5A5.5 5.5 0 0 0 16.5 3c-1.76 0-3 .5-4.5 2-1.5-1.5-2.74-2-4.5-2A5.5 5.5 0 0 0 2 8.5c0 2.3 1.5 4.05 3 5.5l7 7Z"/></svg><span class="t" id="t65" style="left:917.90px;top:973.30px;font-size:16.42px;color:#0b0f1a;font-weight:700;letter-spacing:0.512px;">Recommended Product 3</span><span class="t" id="t66" style="left:917.74px;top:1005.35px;font-size:15.42px;color:#6a7282;letter-spacing:0.247px;">Lorem ipsum dolor sit amet</span><div class="a" style="left:1217.00px;top:773.00px;width:296.00px;height:300.00px;background:#fff;border:1px solid #eff0f3;border-radius:16px;overflow:hidden;box-shadow:0 4px 7px -1px rgba(0,0,0,.09),0 2px 4px -2px rgba(0,0,0,.07)"><div class="a" style="left:0;top:0;width:100%;height:175.9px;background:linear-gradient(180deg,rgba(0,0,0,0) 0%,rgba(0,0,0,0) 50%,rgba(0,0,0,.23) 100%),linear-gradient(135deg,#f3f4f6 0%,#e7e9ed 100%)"></div></div><div class="a" style="left:1472.40px;top:786.00px;width:28.00px;height:28.00px;background:rgba(255,255,255,.94);border-radius:50%;box-shadow:0 1px 3px rgba(0,0,0,.12)"></div><svg class="i" style="left:1478.40px;top:792.20px;" width="16.00" height="16.00" viewBox="0 0 24 24" fill="none" stroke="#364153" stroke-width="2" stroke-linecap="round" stroke-linejoin="round"><path d="M19 14c1.49-1.46 3-3.21 3-5.5A5.5 5.5 0 0 0 16.5 3c-1.76 0-3 .5-4.5 2-1.5-1.5-2.74-2-4.5-2A5.5 5.5 0 0 0 2 8.5c0 2.3 1.5 4.05 3 5.5l7 7Z"/></svg><span class="t" id="t67" style="left:1237.90px;top:973.30px;font-size:16.42px;color:#0b0f1a;font-weight:700;letter-spacing:0.487px;">Recommended Product 4</span><span class="t" id="t68" style="left:1237.74px;top:1005.35px;font-size:15.42px;color:#6a7282;letter-spacing:0.247px;">Lorem ipsum dolor sit amet</span><div class="a" style="left:1547.00px;top:154.00px;width:316.00px;height:581.00px;background:#fff;border-radius:16px;overflow:hidden;box-shadow:0 0 0 1px rgba(20,30,60,.07),0 10px 15px -3px rgba(0,0,0,.10),0 4px 6px -4px rgba(0,0,0,.08)"><div class="a" style="left:0;top:0;width:316px;height:59.8px;background:linear-gradient(90deg,#2b7fff 0%,#155dfc 100%)"></div></div><svg class="i" style="left:1571.00px;top:173.80px;" width="20.00" height="20.00" viewBox="0 0 24 24" fill="none" stroke="#fff" stroke-width="2" stroke-linecap="round" stroke-linejoin="round"><path d="M11.525 2.295a.53.53 0 0 1 .95 0l2.31 4.679a2.123 2.123 0 0 0 1.595 1.16l5.166.756a.53.53 0 0 1 .294.904l-3.736 3.638a2.123 2.123 0 0 0-.611 1.878l.882 5.14a.53.53 0 0 1-.771.56l-4.618-2.428a2.122 2.122 0 0 0-1.973 0L6.396 21.01a.53.53 0 0 1-.77-.56l.881-5.139a2.122 2.122 0 0 0-.611-1.879L2.16 9.795a.53.53 0 0 1 .294-.906l5.165-.755a2.122 2.122 0 0 0 1.597-1.16z"/></svg><span class="t" id="t69" style="left:1598.54px;top:174.60px;font-size:18.90px;color:#fff;font-weight:700;letter-spacing:-0.029px;">Featured MSMEs</span><div class="a" style="left:1571.20px;top:238.20px;width:130.60px;height:37.60px;background:linear-gradient(90deg,#dbeafe 0%,#bedbff 100%);border:1px solid #b5d4fb;border-radius:11px"></div><span class="t" id="t70" style="left:1604.43px;top:249.80px;font-size:14.53px;color:#1447e6;font-weight:700;letter-spacing:0.402px;">Featured</span><div class="a" style="left:1710.00px;top:238.20px;width:128.60px;height:37.60px;background:#f3f4f6;border-radius:11px"></div><span class="t" id="t71" style="left:1740.04px;top:249.80px;font-size:14.53px;color:#364153;font-weight:700;letter-spacing:-0.631px;">All MSMEs</span><div class="a" style="left:1571.00px;top:300.20px;width:267.60px;height:160.60px;background:linear-gradient(135deg,#ffffff 0%,#f2f7ff 100%);border:2px solid #b8d6fb;border-radius:17px"></div><div class="a" style="left:1589.00px;top:318.20px;width:48.00px;height:48.00px;border-radius:50%;background:linear-gradient(135deg,#519dff 0%,#155dfc 100%);box-shadow:0 7px 10px -2px rgba(0,0,0,.18),0 3px 5px -2px rgba(0,0,0,.12)"></div><svg class="i" style="left:1601.00px;top:330.20px;" width="24.00" height="24.00" viewBox="0 0 24 24" fill="none" stroke="#fff" stroke-width="2" stroke-linecap="round" stroke-linejoin="round"><path d="M21 8a2 2 0 0 0-1-1.73l-7-4a2 2 0 0 0-2 0l-7 4A2 2 0 0 0 3 8v8a2 2 0 0 0 1 1.73l7 4a2 2 0 0 0 2 0l7-4A2 2 0 0 0 21 16Z"/><path d="m3.3 7 8.7 5 8.7-5"/><path d="M12 22V12"/></svg><span class="t" id="t72" style="left:1648.80px;top:321.23px;font-size:14.97px;color:#0a0a0a;font-weight:700;letter-spacing:-0.330px;">Businiz Ko!</span><div class="a" style="left:1770.40px;top:318.40px;width:50.60px;height:23.40px;background:#fef4c0;border-radius:12px"></div><svg class="i" style="left:1778.30px;top:324.30px;" width="11.40" height="11.40" viewBox="0 0 24 24" fill="#f5a800" stroke="#f5a800" stroke-width="2" stroke-linecap="round" stroke-linejoin="round"><path d="M11.525 2.295a.53.53 0 0 1 .95 0l2.31 4.679a2.123 2.123 0 0 0 1.595 1.16l5.166.756a.53.53 0 0 1 .294.904l-3.736 3.638a2.123 2.123 0 0 0-.611 1.878l.882 5.14a.53.53 0 0 1-.771.56l-4.618-2.428a2.122 2.122 0 0 0-1.973 0L6.396 21.01a.53.53 0 0 1-.77-.56l.881-5.139a2.122 2.122 0 0 0-.611-1.879L2.16 9.795a.53.53 0 0 1 .294-.906l5.165-.755a2.122 2.122 0 0 0 1.597-1.16z"/></svg><span class="t" id="t73" style="left:1794.62px;top:324.22px;font-size:12.50px;color:#894b00;font-weight:700;letter-spacing:0.453px;">5.0</span><div class="a" style="left:1649.20px;top:342.00px;width:120.80px;height:40.20px;background:#dbeafe;border-radius:20px"></div><span class="t" id="t74" style="left:1656.68px;top:348.62px;font-size:12.73px;color:#1d5bf0;letter-spacing:0.989px;-webkit-text-stroke:0.25px #1d5bf0;">Handmade</span><span class="t" id="t75" style="left:1657.08px;top:364.22px;font-size:12.73px;color:#1d5bf0;letter-spacing:0.507px;-webkit-text-stroke:0.25px #1d5bf0;">Crafts</span><svg class="i" style="left:1648.90px;top:392.30px;" width="12.00" height="12.00" viewBox="0 0 24 24" fill="none" stroke="#6a7282" stroke-width="1.8" stroke-linecap="round" stroke-linejoin="round"><path d="M20 10c0 4.993-5.539 10.193-7.399 11.799a1 1 0 0 1-1.202 0C9.539 20.193 4 14.993 4 10a8 8 0 0 1 16 0"/><circle cx="12" cy="10" r="3"/></svg><span class="t" id="t76" style="left:1664.38px;top:391.65px;font-size:13.17px;color:#6a7282;letter-spacing:0.024px;">Iloilo City, Philippines</span><div class="a" style="left:1649.20px;top:419.20px;width:72.80px;height:24.00px;background:#dbeafe;border-radius:12px"></div><span class="t" id="t77" style="left:1661.27px;top:425.09px;font-size:12.65px;color:#1447e6;font-weight:700;letter-spacing:-0.316px;">+ Follow</span><div class="a" style="left:1571.00px;top:477.20px;width:267.60px;height:160.60px;background:linear-gradient(135deg,#ffffff 0%,#f2f7ff 100%);border:2px solid #b8d6fb;border-radius:17px"></div><div class="a" style="left:1589.00px;top:495.20px;width:48.00px;height:48.00px;border-radius:50%;background:linear-gradient(135deg,#519dff 0%,#155dfc 100%);box-shadow:0 7px 10px -2px rgba(0,0,0,.18),0 3px 5px -2px rgba(0,0,0,.12)"></div><svg class="i" style="left:1601.00px;top:507.20px;" width="24.00" height="24.00" viewBox="0 0 24 24" fill="none" stroke="#fff" stroke-width="2" stroke-linecap="round" stroke-linejoin="round"><path d="M21 8a2 2 0 0 0-1-1.73l-7-4a2 2 0 0 0-2 0l-7 4A2 2 0 0 0 3 8v8a2 2 0 0 0 1 1.73l7 4a2 2 0 0 0 2 0l7-4A2 2 0 0 0 21 16Z"/><path d="m3.3 7 8.7 5 8.7-5"/><path d="M12 22V12"/></svg><span class="t" id="t78" style="left:1648.80px;top:498.23px;font-size:14.97px;color:#0a0a0a;font-weight:700;letter-spacing:-0.330px;">Businiz Ko!</span><div class="a" style="left:1770.40px;top:495.40px;width:50.60px;height:23.40px;background:#fef4c0;border-radius:12px"></div><svg class="i" style="left:1778.30px;top:501.30px;" width="11.40" height="11.40" viewBox="0 0 24 24" fill="#f5a800" stroke="#f5a800" stroke-width="2" stroke-linecap="round" stroke-linejoin="round"><path d="M11.525 2.295a.53.53 0 0 1 .95 0l2.31 4.679a2.123 2.123 0 0 0 1.595 1.16l5.166.756a.53.53 0 0 1 .294.904l-3.736 3.638a2.123 2.123 0 0 0-.611 1.878l.882 5.14a.53.53 0 0 1-.771.56l-4.618-2.428a2.122 2.122 0 0 0-1.973 0L6.396 21.01a.53.53 0 0 1-.77-.56l.881-5.139a2.122 2.122 0 0 0-.611-1.879L2.16 9.795a.53.53 0 0 1 .294-.906l5.165-.755a2.122 2.122 0 0 0 1.597-1.16z"/></svg><span class="t" id="t79" style="left:1794.62px;top:501.22px;font-size:12.50px;color:#894b00;font-weight:700;letter-spacing:0.453px;">5.0</span><div class="a" style="left:1649.20px;top:519.00px;width:120.80px;height:40.20px;background:#dbeafe;border-radius:20px"></div><span class="t" id="t80" style="left:1656.68px;top:525.62px;font-size:12.73px;color:#1d5bf0;letter-spacing:0.989px;-webkit-text-stroke:0.25px #1d5bf0;">Handmade</span><span class="t" id="t81" style="left:1657.08px;top:541.22px;font-size:12.73px;color:#1d5bf0;letter-spacing:0.507px;-webkit-text-stroke:0.25px #1d5bf0;">Crafts</span><svg class="i" style="left:1648.90px;top:569.30px;" width="12.00" height="12.00" viewBox="0 0 24 24" fill="none" stroke="#6a7282" stroke-width="1.8" stroke-linecap="round" stroke-linejoin="round"><path d="M20 10c0 4.993-5.539 10.193-7.399 11.799a1 1 0 0 1-1.202 0C9.539 20.193 4 14.993 4 10a8 8 0 0 1 16 0"/><circle cx="12" cy="10" r="3"/></svg><span class="t" id="t82" style="left:1664.38px;top:568.65px;font-size:13.17px;color:#6a7282;letter-spacing:0.024px;">Iloilo City, Philippines</span><div class="a" style="left:1649.20px;top:596.20px;width:72.80px;height:24.00px;background:#dbeafe;border-radius:12px"></div><span class="t" id="t83" style="left:1661.27px;top:602.09px;font-size:12.65px;color:#1447e6;font-weight:700;letter-spacing:-0.316px;">+ Follow</span><div class="a" style="left:1571.00px;top:662.00px;width:267.60px;height:47.80px;background:linear-gradient(90deg,#155dfc 0%,#1447e6 100%);border-radius:13px;box-shadow:0 8px 12px -3px rgba(0,0,0,.14),0 3px 5px -3px rgba(0,0,0,.10)"></div><span class="t" id="t84" style="left:1622.67px;top:677.53px;font-size:16.86px;color:#fff;font-weight:700;letter-spacing:-0.437px;">Explore More MSMEs</span><div class="a" style="left:1547.00px;top:762.00px;width:316.00px;height:400.00px;background:#fff;border-radius:16px;overflow:hidden;box-shadow:0 0 0 1px rgba(20,30,60,.07),0 10px 15px -3px rgba(0,0,0,.10),0 4px 6px -4px rgba(0,0,0,.08)"><div class="a" style="left:0;top:0;width:316px;height:59.8px;background:linear-gradient(90deg,#2b7fff 0%,#155dfc 100%)"></div></div><svg class="i" style="left:1571.00px;top:781.80px;" width="20.00" height="20.00" viewBox="0 0 24 24" fill="none" stroke="#fff" stroke-width="2" stroke-linecap="round" stroke-linejoin="round"><path d="M14 18V6a2 2 0 0 0-2-2H4a2 2 0 0 0-2 2v11a1 1 0 0 0 1 1h2"/><path d="M15 18H9"/><path d="M19 18h2a1 1 0 0 0 1-1v-3.65a1 1 0 0 0-.22-.624l-3.48-4.35A1 1 0 0 0 17.52 8H14"/><circle cx="17" cy="18" r="2"/><circle cx="7" cy="18" r="2"/></svg><span class="t" id="t85" style="left:1598.56px;top:782.26px;font-size:18.60px;color:#fff;font-weight:700;letter-spacing:0.288px;">Recent Orders</span><div class="a" style="left:1571.40px;top:846.00px;width:267.40px;height:81.30px;background:linear-gradient(90deg,#f9fafb 0%,#eff6ff 100%);border:1px solid #e5e7eb;border-radius:16px"></div><div class="a" style="left:1588.00px;top:863.00px;width:48.00px;height:48.00px;border-radius:13px;background:linear-gradient(135deg,#51a2ff 0%,#155dfc 100%);box-shadow:0 4px 6px -1px rgba(0,0,0,.14),0 2px 4px -2px rgba(0,0,0,.10)"></div><div class="a" style="left:1652.00px;top:872.70px;width:80.00px;height:12.00px;background:#d1d5dc;border-radius:6px"></div><div class="a" style="left:1652.00px;top:898.50px;width:64.00px;height:8.20px;background:#e5e7eb;border-radius:4px"></div><div class="a" style="left:1768.20px;top:866.40px;width:53.80px;height:24.00px;background:#dbeafe;border-radius:12px"></div><span class="t" id="t86" style="left:1776.18px;top:872.77px;font-size:12.79px;color:#1447e6;font-weight:700;letter-spacing:0.649px;">#1000</span><div class="a" style="left:1571.40px;top:944.00px;width:267.40px;height:81.30px;background:linear-gradient(90deg,#f9fafb 0%,#eff6ff 100%);border:1px solid #e5e7eb;border-radius:16px"></div><div class="a" style="left:1588.00px;top:961.00px;width:48.00px;height:48.00px;border-radius:13px;background:linear-gradient(135deg,#51a2ff 0%,#155dfc 100%);box-shadow:0 4px 6px -1px rgba(0,0,0,.14),0 2px 4px -2px rgba(0,0,0,.10)"></div><div class="a" style="left:1652.00px;top:970.70px;width:80.00px;height:12.00px;background:#d1d5dc;border-radius:6px"></div><div class="a" style="left:1652.00px;top:996.50px;width:64.00px;height:8.20px;background:#e5e7eb;border-radius:4px"></div><div class="a" style="left:1771.60px;top:964.40px;width:50.40px;height:24.00px;background:#dbeafe;border-radius:12px"></div><span class="t" id="t87" style="left:1779.58px;top:970.77px;font-size:12.79px;color:#1447e6;font-weight:700;letter-spacing:-0.243px;">#1001</span></div></div><div id="sb"><div class="a" style="left:3px;top:18px;width:9px;height:770px;border-radius:4.5px;background:#9f9f9f"></div><svg class="i" style="left:2.6px;top:4.6px" width="9.8" height="7.6" viewBox="0 0 9.8 7.6"><path d="M4.9 0.6 9.2 6.6a.5.5 0 0 1-.4.8H1a.5.5 0 0 1-.4-.8z" fill="#9f9f9f"/></svg><svg class="i" style="left:2.6px;top:975.6px" width="9.8" height="7.6" viewBox="0 0 9.8 7.6"><path d="M4.9 7 9.2 1a.5.5 0 0 0-.4-.8H1a.5.5 0 0 0-.4.8z" fill="#9f9f9f"/></svg></div></body></html>
